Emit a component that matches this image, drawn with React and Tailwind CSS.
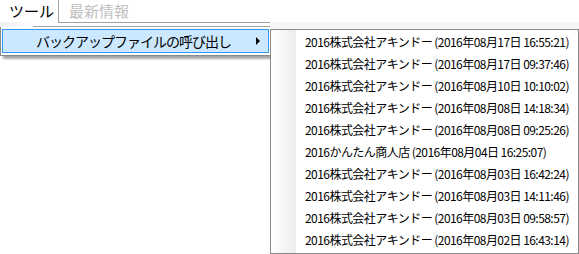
import React from 'react';

const history = [
  '2016株式会社アキンドー (2016年08月17日 16:55:21)',
  '2016株式会社アキンドー (2016年08月17日 09:37:46)',
  '2016株式会社アキンドー (2016年08月10日 10:10:02)',
  '2016株式会社アキンドー (2016年08月08日 14:18:34)',
  '2016株式会社アキンドー (2016年08月08日 09:25:26)',
  '2016かんたん商人店 (2016年08月04日 16:25:07)',
  '2016株式会社アキンドー (2016年08月03日 16:42:24)',
  '2016株式会社アキンドー (2016年08月03日 14:11:46)',
  '2016株式会社アキンドー (2016年08月03日 09:58:57)',
  '2016株式会社アキンドー (2016年08月02日 16:43:14)',
];

const font = { fontFamily: '"Noto Sans CJK JP", "Noto Sans", sans-serif' };

export default function App() {
  return (
    <div className="relative w-[579px] h-[254px] bg-white overflow-hidden text-black" style={font}>
      {/* menu bar */}
      <div className="flex h-[23px]">
        <div className="w-[59px] h-[23px] border-r border-[#a0a0a0] bg-white text-[15px] leading-[22px] pl-[9px]">ツール</div>
        <div className="flex-1 border-b border-[#a0a0a0] text-[15px] leading-[22px] pl-[10px] text-[#c0c0c0]">最新情報</div>
      </div>

      {/* dropdown */}
      <div className="absolute left-0 top-[22px] w-[35px] h-[6px] bg-gradient-to-r from-[#f0f0f0] to-white" />
      <div className="absolute left-0 top-[27px] w-[271px] h-[29px] bg-white border-x border-b border-[#8a8a8a] shadow-[3px_3px_2px_rgba(0,0,0,0.35)]">
        <div className="absolute left-[32px] right-0 top-[-1px] border-t border-[#a0a0a0]" />
        <div className="absolute left-[1px] top-[2px] w-[267px] h-[24px] bg-[#cce8ff] border border-[#3399ff] flex items-center">
          <span className="pl-[33px] text-[14px] leading-none tracking-[-1px] whitespace-nowrap">バックアップファイルの呼び出し</span>
          <span className="ml-auto mr-[8px] w-0 h-0 border-y-[4px] border-y-transparent border-l-[4px] border-l-black" />
        </div>
      </div>

      {/* submenu */}
      <div className="absolute left-[270px] top-[22px] right-0 h-[7px] bg-[#f6f6f6]" />
      <div className="absolute left-[270px] top-[29px] w-[309px] h-[225px] bg-white border border-[#8a8a8a] flex">
        <div className="w-[25px] shrink-0 h-full bg-gradient-to-r from-white to-[#ececec]" />
        <div className="flex flex-col pt-[1px] pl-[9px]">
          {history.map((h) => (
            <div key={h} className="h-[22px] flex items-center text-[12px] leading-none whitespace-nowrap tracking-[-0.55px]">{h}</div>
          ))}
        </div>
      </div>
    </div>
  );
}
